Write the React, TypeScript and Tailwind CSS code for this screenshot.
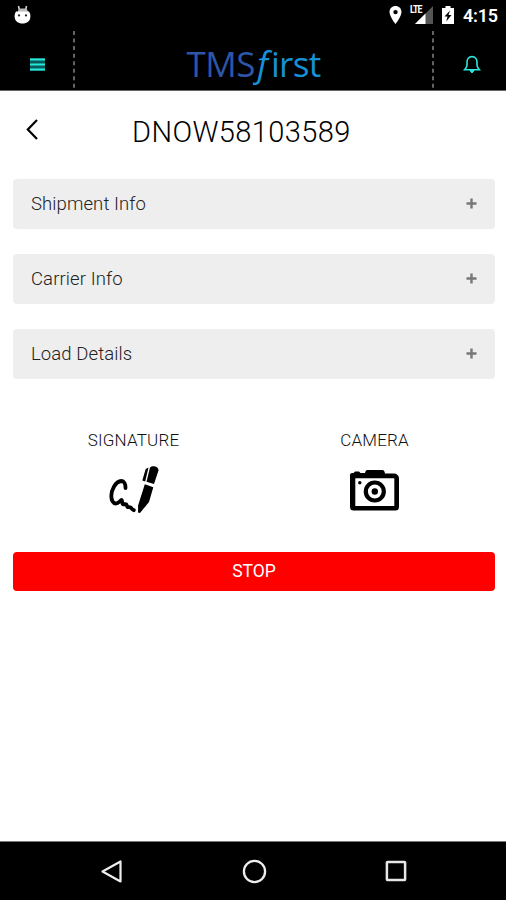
import { useState } from "react"

const sections = ["Shipment Info", "Carrier Info", "Load Details"]

function StatusBar() {
  return (
    <div className="h-[30px] flex items-center justify-between pl-[14px] pr-[8px]">
      <svg className="w-[18px] h-[20px]" viewBox="0 0 18 20">
        <path d="M4.500 1l1 4.500M12.500 1l-1 4.500" stroke="#ddd" strokeWidth="1.500" />
        <path d="M5 3.500h7.500l2 4h-11z" fill="#bbb" />
        <path d="M2 6.500h13c1 1.500 1.400 3 1.400 5 0 4.500-3.500 7-7.900 7S.6 16 .6 11.500C.6 9.500 1 8 2 6.500z" fill="#fff" />
        <circle cx="5" cy="10.400" r="1.100" fill="#222" />
        <circle cx="12" cy="10.400" r="1.100" fill="#222" />
      </svg>
      <div className="flex items-center">
        <svg className="w-[13px] h-[20px]" viewBox="0 0 13 20">
          <path fillRule="evenodd" d="M6.500 1C3 1 .5 3.600.5 7c0 4.500 6 12 6 12s6-7.500 6-12c0-3.400-2.500-6-6-6zm0 3.900a2.200 2.200 0 1 1 0 4.400 2.200 2.200 0 0 1 0-4.400z" fill="#fff" />
        </svg>
        <div className="relative ml-2 w-[24px] h-[20px]">
          <svg className="w-[24px] h-[20px]" viewBox="0 0 24 20">
            <path d="M23 1v18H5z" fill="#555" />
            <path d="M15.500 8.500V19H5z" fill="#fff" />
          </svg>
          <span className="absolute left-0 top-0 h-[9px] w-[14px] bg-black" />
          <span className="absolute left-0 top-0 text-[11px] leading-[10px] font-bold tracking-[-1.100px] origin-left scale-x-[0.8]">LTE</span>
        </div>
        <svg className="ml-[8px] w-[12px] h-[20px]" viewBox="0 0 12 20">
          <path fillRule="evenodd" d="M3.500 1h5v2H12v16H0V3h3.500zM8 5.500l-5.500 6h3l-1.200 5 5.200-6.500h-3z" fill="#fff" />
        </svg>
        <span className="ml-[9px] w-[35px] pt-px text-[18px] leading-[20px] font-semibold tracking-[-0.200px] whitespace-nowrap">4:15</span>
      </div>
    </div>
  )
}

function Divider() {
  return (
    <svg className="w-[2px] h-[60px] shrink-0" viewBox="0 0 2 60">
      <path d="M1 1v59" stroke="#999" strokeWidth="1.300" strokeDasharray="4 3.550" />
    </svg>
  )
}

function Header() {
  return (
    <div className="h-[61px] flex items-start border-b border-[#666]">
      <button className="w-[73px] h-[60px] pl-[30px] pt-[9px] flex items-center">
        <svg className="w-[15px] h-[13px]" viewBox="0 0 15 13">
          <path d="M0 0h15v13H0z" fill="#075c59" />
          <path d="M0 1.500h15M0 6.500h15M0 11.500h15" stroke="#27e8dd" strokeWidth="2" />
        </svg>
      </button>
      <Divider />
      <div className="flex-1 h-[60px] flex items-center justify-center pt-[6px] font-['Open_Sans','Noto_Sans',sans-serif] text-[35px] leading-none whitespace-nowrap">
        <span className="text-[#2d55a8] tracking-[-0.500px]">TMS</span>
        <span className="text-[#1690d6] italic ml-[2px] mr-[3px]">f</span>
        <span className="text-[#1690d6] tracking-[-0.700px]">irst</span>
      </div>
      <Divider />
      <button className="w-[72px] h-[60px] pl-[29px] pt-[9px] flex items-center">
        <svg className="w-[18px] h-[19px]" viewBox="0 0 18 19" fill="none" stroke="#2ae8dc" strokeWidth="1.600">
          <path d="M9 1.600C5.800 1.600 4 4 4 7v3.200c0 2.200-1.400 3.200-2.500 4.600h15C15.400 13.400 14 12.400 14 10.200V7c0-3-1.800-5.400-5-5.400z" />
          <path d="M7 15.500h4L9 18z" fill="#2ae8dc" strokeWidth="1" />
        </svg>
      </button>
    </div>
  )
}

function NavBar() {
  return (
    <div className="h-[59px] bg-black border-t border-[#777] flex items-center justify-between pl-[100px] pr-[99px]">
      <svg className="w-[23px] h-[25px]" viewBox="0 0 23 25" fill="none" stroke="#eee" strokeWidth="2.200">
        <path d="M20.500 2.500v20L2.500 12.500z" strokeLinejoin="round" />
      </svg>
      <svg className="w-[25px] h-[25px]" viewBox="0 0 25 25" fill="none" stroke="#eee" strokeWidth="2.300">
        <circle cx="12.500" cy="12.500" r="10.600" />
      </svg>
      <svg className="w-[22px] h-[22px]" viewBox="0 0 22 22" fill="none" stroke="#e6e6e6" strokeWidth="2.500">
        <rect x="1.900" y="1.900" width="18.200" height="18.200" rx="0.500" />
      </svg>
    </div>
  )
}

export default function App() {
  const [open, setOpen] = useState<string | null>(null)

  return (
    <div className="w-full h-[900px] flex flex-col bg-white font-['Roboto',sans-serif] text-black">
      <div className="bg-black text-white">
        <StatusBar />
        <Header />
      </div>
      <main className="flex-1 pl-[13px] pr-[11px]">
        <div className="h-[88px] flex items-start">
          <button className="ml-[13px] mt-[28px] w-[12px]">
            <svg className="w-[12px] h-[21px]" viewBox="0 0 12 21" fill="none" stroke="#000" strokeWidth="2.200">
              <path d="M11 1L1.800 10.500 11 20" />
            </svg>
          </button>
          <h1 className="ml-[94px] mt-[23px] text-[29px] leading-[36px] font-light tracking-[0.400px] whitespace-nowrap">DNOW58103589</h1>
        </div>
        <div className="flex flex-col gap-[25px]">
          {sections.map(name => (
            <button
              key={name}
              onClick={() => setOpen(open === name ? null : name)}
              className="h-[50px] rounded-[4px] bg-[#eee] flex items-center justify-between px-[18px]"
            >
              <span className="pt-px text-[18.500px] font-light tracking-[0.100px] text-[#222]">{name}</span>
              <svg className="mb-[2px] w-[11px] h-[11px]" viewBox="0 0 11 11" stroke="#777" strokeWidth="2.400">
                <path d="M5.500 .5v10M.5 5.500h10" />
              </svg>
            </button>
          ))}
        </div>
        <div className="mt-[49px] h-[124px] grid grid-cols-2">
          <button className="flex flex-col items-center">
            <span className="text-[17px] leading-[24px] font-light tracking-[0.200px] text-[#111]">SIGNATURE</span>
            <svg className="mt-[13px] w-[50px] h-[50px]" viewBox="0 0 50 50">
              <path d="M16.500 23C16.500 19 15 16 12.500 16 6 16.500 2.500 25 2.300 31c0 4.500 2 7.500 4.500 7.500 2.500 0 4.200-2.700 5.800-3.500.9.800.2 4 1.600 4.300 1.300.300 2-.6 3 0 .9.700.4 2.400 1.500 2.800 1 .3 1.600-.4 2.700.200 1 .6 1.600 2.400 3.400 2.900" fill="none" stroke="#000" strokeWidth="3.800" strokeLinecap="round" strokeLinejoin="round" />
              <path d="M41 2.500C43.500 .3 49.300 1.200 49.500 5.500L45 19l-7.500-2.200z" />
              <path d="M39.500 2.500l-2.800 1.500L33.300 15.500l2.900.900z" />
              <path d="M35.800 19.300l8.500 3L40 37l-9 11-2-.600.100-7z" />
            </svg>
          </button>
          <button className="flex flex-col items-center">
            <span className="text-[17px] leading-[24px] font-light tracking-[0.200px] text-[#111]">CAMERA</span>
            <svg className="mt-[18px] w-[49px] h-[41px]" viewBox="0 0 49 41">
              <path fillRule="evenodd" d="M3.500 3l1.500-1.500h4L10.500 3H15c.5-1.800 1-3 2.500-3h15c1.500 0 2 1.500 2.500 3.500h9a5 5 0 0 1 5 5V37a3.500 3.500 0 0 1-3.500 3.500h-42A3.500 3.500 0 0 1 0 37V5c0-1.500 1-2 3.500-2zM5.300 8.300V36h39V8.300z" />
              <circle cx="24.800" cy="21.500" r="9" fill="#fff" stroke="#000" strokeWidth="4.200" />
              <circle cx="24.800" cy="21.500" r="3.200" />
              <circle cx="9.800" cy="12.800" r="1.700" />
            </svg>
          </button>
        </div>
        <button className="w-full h-[39px] rounded-[4px] bg-[#f00] flex items-center justify-center text-[17.500px] text-white">
          <span className="mb-px">STOP</span>
        </button>
      </main>
      <NavBar />
    </div>
  )
}
